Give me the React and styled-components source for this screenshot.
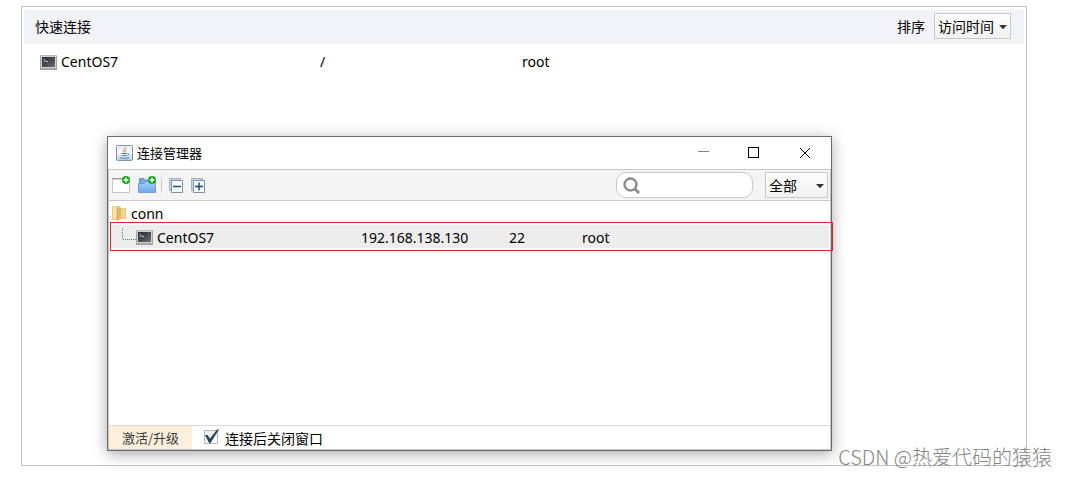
import React from "react";
import styled, { createGlobalStyle, css } from "styled-components";

const GlobalStyle = createGlobalStyle`
  * { box-sizing: border-box; }
  body {
    margin: 0;
    background: #fff;
    color: #000;
    font-family: "Noto Sans", "Noto Sans CJK SC", sans-serif;
    font-size: 14px;
    line-height: 20px;
  }
  button, input, select { font: inherit; color: inherit; }
  svg { display: block; flex: none; }
`;

const Page = styled.div`
  padding: 6px 40px 11px 21px;
`;

const Panel = styled.main`
  position: relative;
  min-height: calc(100vh - 17px);
  border: 1px solid #c3c3c3;
  padding: 3px 2px;
`;

const PanelHeader = styled.header`
  display: flex;
  align-items: center;
  justify-content: space-between;
  height: 34px;
  padding: 0 13px 2px 11px;
  background: #f2f3f8;
`;

const cjkText = css`
  font-family: "Noto Sans CJK SC", sans-serif;
`;

const PanelTitle = styled.h1`
  ${cjkText}
  margin: 0;
  font-size: 14px;
  font-weight: 400;
`;

const SortLabel = styled.label`
  ${cjkText}
  display: flex;
  align-items: center;
  gap: 9px;
`;

const SelectBox = styled.span`
  position: relative;
  display: block;
  width: ${(p) => p.$width};
  svg {
    position: absolute;
    right: 4px;
    top: 12px;
    pointer-events: none;
  }
`;

const Select = styled.select`
  ${cjkText}
  appearance: none;
  display: block;
  width: 100%;
  height: 26px;
  margin: 0;
  padding: 0 0 0 3px;
  border: 1px solid #c9c9c9;
  border-radius: 0;
  background: linear-gradient(#fdfdfd, #f1f1f1);
`;

const QuickList = styled.ul`
  list-style: none;
  margin: 0;
  padding: 8px 16px;
`;

const QuickRow = styled.li`
  display: grid;
  grid-template-columns: 280px 202px 1fr;
  align-items: center;
`;

const NameCell = styled.span`
  display: flex;
  align-items: center;
  gap: 4px;
`;

const Window = styled.section`
  position: absolute;
  top: 129px;
  left: 85px;
  right: 194px;
  border: 1px solid #6b6b6b;
  background: #fff;
  box-shadow: 0 3px 14px rgba(0, 0, 0, 0.34);
`;

const TitleBar = styled.header`
  display: flex;
  align-items: center;
  gap: 4px;
  height: 32px;
  padding: 0 14px 0 8px;
`;

const WindowTitle = styled.h2`
  ${cjkText}
  flex: 1;
  margin: 0;
  font-size: 13px;
  font-weight: 400;
`;

const WindowButtons = styled.div`
  display: flex;
  gap: 27px;
`;

const IconButton = styled.button`
  display: flex;
  align-items: center;
  justify-content: center;
  padding: 0;
  border: 0;
  background: none;
  width: ${(p) => p.$width || "18px"};
  height: 24px;
`;

const WindowBody = styled.div`
  border: 1px solid #c6c6c6;
`;

const Toolbar = styled.div`
  display: flex;
  align-items: center;
  height: 31px;
  padding: 0 2px 0 3px;
  border-bottom: 1px solid #c6c6c6;
  background: #f4f4f4;
`;

const ToolGroup = styled.div`
  display: flex;
  align-items: center;
  flex: 1;
  gap: 8px;
`;

const Divider = styled.span`
  width: 1px;
  height: 22px;
  margin: 0 -1px 0 -3px;
  background: linear-gradient(#f0f0f0, #bdbdbd, #f0f0f0);
`;

const SearchBox = styled.label`
  display: flex;
  align-items: center;
  gap: 4px;
  width: 137px;
  height: 26px;
  margin-right: 12px;
  padding: 0 8px 0 6px;
  border: 1px solid #c9c9c9;
  border-radius: 10px;
  background: #fff;
  input {
    flex: 1;
    min-width: 0;
    padding: 0;
    border: 0;
    outline: 0;
    background: none;
  }
`;

const Tree = styled.div`
  min-height: 224px;
`;

const FolderRow = styled.div`
  display: flex;
  align-items: center;
  gap: 5px;
  height: 21px;
  padding: 4px 0 0 3px;
`;

const SelectedFrame = styled.div`
  position: relative;
  margin: 0 -3px 0 1px;
  border: 1px solid #e8242a;
  padding: 2px 3px 2px 0;
`;

const HostRow = styled.div`
  display: grid;
  grid-template-columns: 250px 148px 73px 1fr;
  align-items: center;
  height: 23px;
  padding-top: 2px;
  background: #ededed;
`;

const HostName = styled.span`
  display: flex;
  align-items: center;
  gap: 4px;
  padding-left: 11px;
`;

const HostIcon = styled.span`
  display: flex;
  align-items: center;
  height: 20px;
`;

const Footer = styled.footer`
  ${cjkText}
  display: flex;
  height: 24px;
  border-top: 1px solid #d9d9d9;
`;

const UpgradeButton = styled.button`
  ${cjkText}
  width: 83px;
  padding: 0;
  border: 0;
  background: #fcefdc;
  color: #3b3b3b;
  font-size: 13px;
`;

const CheckLabel = styled.label`
  display: flex;
  align-items: center;
  gap: 5px;
  padding-left: 12px;
`;

const CheckBox = styled.span`
  position: relative;
  width: 16px;
  height: 16px;
  margin-top: -2px;
  input {
    appearance: none;
    display: block;
    width: 14px;
    height: 14px;
    margin: 1px 0 0;
    border: 1px solid #b9b9b9;
    background: linear-gradient(#ececec, #fff);
  }
  svg {
    position: absolute;
    left: 0;
    top: 0;
    pointer-events: none;
    visibility: hidden;
  }
  input:checked + svg { visibility: visible; }
`;

const Watermark = styled.p`
  position: absolute;
  right: 15px;
  bottom: 5px;
  margin: 0;
  font-family: "Noto Sans CJK SC", sans-serif;
  font-size: 20px;
  font-weight: 300;
  line-height: 30px;
  color: #858585;
  white-space: nowrap;
`;

const Stage = styled.div`
  position: relative;
`;

const Caret = () => (
  <svg width="8" height="5" viewBox="0 0 8 5" aria-hidden="true">
    <path d="M0 0H8L4 4.3Z" fill="#333" />
  </svg>
);

const TerminalIcon = () => (
  <svg width="17" height="15" viewBox="0 0 17 15" aria-hidden="true">
    <defs>
      <linearGradient id="screen" x2="1" y2="1">
        <stop offset="0.2" stopColor="#30303a" />
        <stop offset="1" stopColor="#70707a" />
      </linearGradient>
    </defs>
    <rect width="17" height="15" fill="#a4a4a4" />
    <path d="M0 0.5H17" stroke="#bcbcbc" />
    <rect x="1.5" y="1.5" width="14" height="11" fill="url(#screen)" stroke="#d2d2d2" />
    <path d="M3.5 4L5.500 5.500L3.500 7M6 6.500H8" stroke="#c8c8d0" fill="none" />
  </svg>
);

const JavaIcon = () => (
  <svg width="17" height="17" viewBox="0 0 17 17" aria-hidden="true">
    <defs>
      <linearGradient id="java" x2="0" y2="1">
        <stop stopColor="#e9eef3" />
        <stop offset="0.5" stopColor="#f6f8fa" />
        <stop offset="1" stopColor="#b5c6d6" />
      </linearGradient>
    </defs>
    <rect x="0.5" y="0.5" width="16" height="15" rx="1" fill="url(#java)" stroke="#7e96ab" />
    <path d="M9 2C10 4 6 4.500 8 7.500M10.500 4.500C9 5 9.500 6 9 7.500" stroke="#e07a38" fill="none" />
    <path d="M5.500 8.500H11M6 10.500H10.500M11.500 8.500C13.500 8.500 13 10.500 11.500 10.500" stroke="#5a83a8" fill="none" />
    <path d="M4 12.500C6 13.600 11 13.600 13 12.500" stroke="#5a83a8" fill="none" />
  </svg>
);

const Plus = () => (
  <g>
    <circle cx="14" cy="4" r="4" fill="#14a51b" />
    <path d="M14 1.500V6.500M11.500 4H16.500" stroke="#fff" strokeWidth="1.4" />
  </g>
);

const NewFileIcon = () => (
  <svg width="18" height="18" viewBox="0 0 18 18" aria-hidden="true">
    <rect x="0.500" y="2.500" width="17" height="14" fill="#fff" stroke="#c6c6c6" />
    <path d="M0 2.500H18" stroke="#9a9a9a" />
    <path d="M1 3.500H17" stroke="#d8d8d8" />
    <Plus />
  </svg>
);

const NewFolderIcon = () => (
  <svg width="18" height="18" viewBox="0 0 18 18" aria-hidden="true">
    <defs>
      <linearGradient id="blueFolder" x2="0" y2="1">
        <stop stopColor="#a9d0fa" />
        <stop offset="1" stopColor="#6ba8ee" />
      </linearGradient>
    </defs>
    <path d="M1.500 15V2.500H6L7.500 4H16.500V15Z" fill="#76a9e0" stroke="#6795cc" />
    <path d="M0.500 7.500H6L8 5.500H17.500V16.500H0.500Z" fill="url(#blueFolder)" stroke="#6c9fdc" />
    <Plus />
  </svg>
);

const StackIcon = ({ expand }) => (
  <svg width="14" height="15" viewBox="0 0 14 15" aria-hidden="true">
    <rect x="0.500" y="0.500" width="11" height="12" fill="#c9d3e0" stroke="#a3b2c4" />
    <rect x="2.500" y="2.500" width="11" height="12" fill="#f7fafd" stroke="#8093ad" />
    <path d={expand ? "M4 8.500H12M8 4.500V12.500" : "M4 8.500H12"} stroke="#104a7c" strokeWidth="1.400" />
  </svg>
);

const FolderIcon = () => (
  <svg width="14" height="17" viewBox="0 0 14 17" aria-hidden="true">
    <path d="M0 1H8V3H14V14H8L5 16L4 15H0Z" fill="#e9c878" />
    <path d="M1 1H4V14H1Z" fill="#f8e3a4" />
    <path d="M5 4L9 2V13L5 16Z" fill="#d5b878" />
    <path d="M9 4H13V13H9Z" fill="#f3d587" />
  </svg>
);

const BranchIcon = () => (
  <svg width="14" height="20" viewBox="0 0 14 20" aria-hidden="true">
    <path d="M0.500 0V11.500H14" stroke="#777" strokeDasharray="1 1" fill="none" />
  </svg>
);

const SearchIcon = () => (
  <svg width="17" height="17" viewBox="0 0 17 17" aria-hidden="true">
    <circle cx="7.500" cy="7.500" r="6" stroke="#8c8c8c" strokeWidth="2.400" fill="none" />
    <path d="M11 11L16 16" stroke="#8c8c8c" strokeWidth="3" />
  </svg>
);

const CheckIcon = () => (
  <svg width="16" height="16" viewBox="0 0 16 16" aria-hidden="true">
    <path d="M1 6L3.500 6L6 9.500L13 0.500H15L6.500 14H5Z" fill="#28475f" />
  </svg>
);

function ConnectionManager() {
  return (
    <Window aria-label="连接管理器">
      <TitleBar>
        <JavaIcon />
        <WindowTitle>连接管理器</WindowTitle>
        <WindowButtons>
          <IconButton $width="24px" aria-label="最小化">
            <svg width="12" height="12" viewBox="0 0 12 12"><path d="M1 4.500H12" stroke="#858585" /></svg>
          </IconButton>
          <IconButton $width="24px" aria-label="最大化">
            <svg width="12" height="12" viewBox="0 0 12 12"><rect x="0.500" y="0.500" width="10" height="10" fill="none" stroke="#000" /></svg>
          </IconButton>
          <IconButton $width="24px" aria-label="关闭">
            <svg width="12" height="12" viewBox="0 0 12 12"><path d="M1 1L11 11M11 1L1 11" stroke="#000" /></svg>
          </IconButton>
        </WindowButtons>
      </TitleBar>
      <WindowBody>
        <Toolbar>
          <ToolGroup>
            <IconButton aria-label="新建连接"><NewFileIcon /></IconButton>
            <IconButton aria-label="新建文件夹"><NewFolderIcon /></IconButton>
            <Divider />
            <IconButton aria-label="全部折叠" $width="14px"><StackIcon /></IconButton>
            <IconButton aria-label="全部展开" $width="14px"><StackIcon expand /></IconButton>
          </ToolGroup>
          <SearchBox>
            <SearchIcon />
            <input type="text" aria-label="搜索" />
          </SearchBox>
          <SelectBox $width="63px">
            <Select aria-label="筛选" defaultValue="全部">
              <option>全部</option>
            </Select>
            <Caret />
          </SelectBox>
        </Toolbar>
        <Tree>
          <FolderRow><FolderIcon />conn</FolderRow>
          <SelectedFrame>
            <HostRow>
              <HostName>
                <HostIcon><BranchIcon /><TerminalIcon /></HostIcon>
                CentOS7
              </HostName>
              <span>192.168.138.130</span>
              <span>22</span>
              <span>root</span>
            </HostRow>
          </SelectedFrame>
        </Tree>
        <Footer>
          <UpgradeButton>激活/升级</UpgradeButton>
          <CheckLabel>
            <CheckBox>
              <input type="checkbox" defaultChecked />
              <CheckIcon />
            </CheckBox>
            连接后关闭窗口
          </CheckLabel>
        </Footer>
      </WindowBody>
    </Window>
  );
}

export default function App() {
  return (
    <>
      <GlobalStyle />
      <Stage>
        <Page>
          <Panel>
            <PanelHeader>
              <PanelTitle>快速连接</PanelTitle>
              <SortLabel>
                排序
                <SelectBox $width="77px">
                  <Select defaultValue="访问时间">
                    <option>访问时间</option>
                  </Select>
                  <Caret />
                </SelectBox>
              </SortLabel>
            </PanelHeader>
            <QuickList>
              <QuickRow>
                <NameCell><TerminalIcon />CentOS7</NameCell>
                <span>/</span>
                <span>root</span>
              </QuickRow>
            </QuickList>
            <ConnectionManager />
          </Panel>
        </Page>
        <Watermark>CSDN @热爱代码的猿猿</Watermark>
      </Stage>
    </>
  );
}
